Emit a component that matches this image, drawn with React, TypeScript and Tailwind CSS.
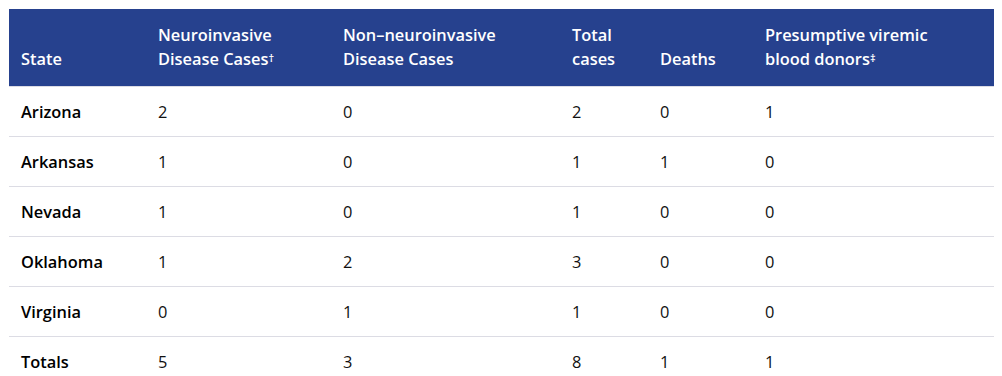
const rows = [
  { state: "Arizona", neuro: 2, non: 0, total: 2, deaths: 0, donors: 1 },
  { state: "Arkansas", neuro: 1, non: 0, total: 1, deaths: 1, donors: 0 },
  { state: "Nevada", neuro: 1, non: 0, total: 1, deaths: 0, donors: 0 },
  { state: "Oklahoma", neuro: 1, non: 2, total: 3, deaths: 0, donors: 0 },
  { state: "Virginia", neuro: 0, non: 1, total: 1, deaths: 0, donors: 0 },
  { state: "Totals", neuro: 5, non: 3, total: 8, deaths: 1, donors: 1 },
];

export default function App() {
  return (
    <div className="bg-white pt-[9px] pl-[9px] pr-[8px] font-['Open_Sans',sans-serif] text-[16.4px] leading-[24px] text-[#111]">
      <table className="w-[985px] table-fixed border-collapse">
        <colgroup>
          <col className="w-[137px]" />
          <col className="w-[185px]" />
          <col className="w-[229px]" />
          <col className="w-[88px]" />
          <col className="w-[105px]" />
          <col className="w-[241px]" />
        </colgroup>
        {/* cabecera */}
        <thead>
          <tr className="bg-[#26418e] text-white text-left">
            <th className="align-bottom px-3 pt-[14px] pb-[15px] font-semibold">State</th>
            <th className="align-bottom px-3 pt-[14px] pb-[15px] font-semibold">
              Neuroinvasive Disease Cases<span className="text-[11px] leading-none align-[3px]">†</span>
            </th>
            <th className="align-bottom px-3 pt-[14px] pb-[15px] font-semibold">Non–neuroinvasive Disease Cases</th>
            <th className="align-bottom px-3 pt-[14px] pb-[15px] font-semibold">Total cases</th>
            <th className="align-bottom px-3 pt-[14px] pb-[15px] font-semibold">Deaths</th>
            <th className="align-bottom px-3 pt-[14px] pb-[15px] font-semibold">
              <span className="inline-block max-w-[175px]">
                Presumptive viremic blood donors<span className="text-[11px] leading-none align-[3px]">‡</span>
              </span>
            </th>
          </tr>
        </thead>
        <tbody>
          {rows.map((r) => (
            <tr key={r.state} className="border-t border-[#dcdce4]">
              <td className="px-3 pt-[13px] pb-[12px] font-semibold text-black">{r.state}</td>
              <td className="px-3 pt-[13px] pb-[12px]">{r.neuro}</td>
              <td className="px-3 pt-[13px] pb-[12px]">{r.non}</td>
              <td className="px-3 pt-[13px] pb-[12px]">{r.total}</td>
              <td className="px-3 pt-[13px] pb-[12px]">{r.deaths}</td>
              <td className="px-3 pt-[13px] pb-[12px]">{r.donors}</td>
            </tr>
          ))}
        </tbody>
      </table>
    </div>
  );
}
